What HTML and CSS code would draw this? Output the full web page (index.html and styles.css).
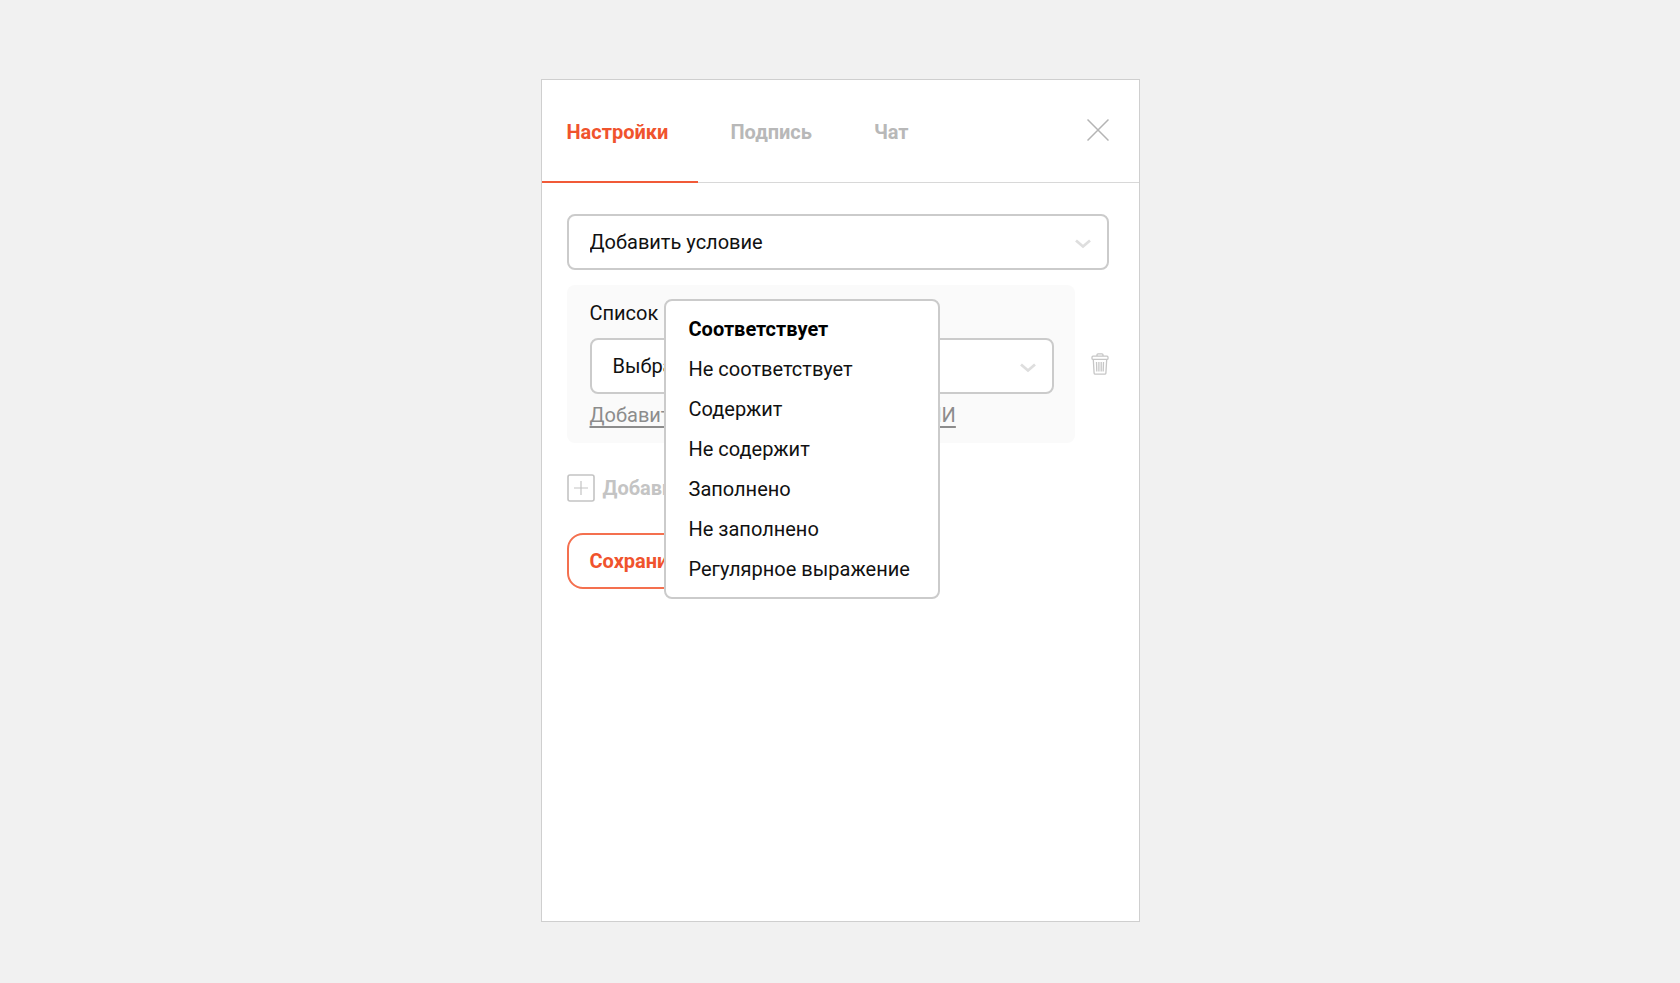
FILE: index.html
```html
<!DOCTYPE html>
<html lang="ru">
<head>
<meta charset="utf-8">
<meta name="viewport" content="width=device-width, initial-scale=1">
<title>Настройки</title>
<link rel="stylesheet" href="styles.css">
</head>
<body>
<main class="panel">
  <header class="panel-head">
    <nav class="tabs">
      <button class="tab tab-active" type="button">Настройки</button>
      <button class="tab" type="button">Подпись</button>
      <button class="tab" type="button">Чат</button>
    </nav>
    <button class="icon-button close" type="button" aria-label="Закрыть">
      <svg width="22" height="22" viewBox="0 0 22 22" fill="none" stroke="#b4b4b4" stroke-width="1.5"><path d="M.5.5l21 21M21.5.5l-21 21"/></svg>
    </button>
  </header>
  <form class="panel-body">
    <div class="select">
      <select class="select-field" aria-label="Условие"><option>Добавить условие</option></select>
      <svg class="chevron" width="16" height="10" viewBox="0 0 16 10" fill="none" stroke="#dedede" stroke-width="2.8"><path d="M1 1.5l7 6 7-6"/></svg>
    </div>
    <div class="condition">
      <section class="group">
        <label class="group-label" for="list">Список</label>
        <div class="select">
          <select class="select-field" id="list"><option>Выбрать</option></select>
          <svg class="chevron" width="16" height="10" viewBox="0 0 16 10" fill="none" stroke="#dedede" stroke-width="2.8"><path d="M1 1.5l7 6 7-6"/></svg>
        </div>
        <a class="group-link" href="#">Добавить условия с операторами ИЛИ</a>
        <ul class="menu">
          <li><button class="menu-item menu-item-current" type="button">Соответствует</button></li>
          <li><button class="menu-item" type="button">Не соответствует</button></li>
          <li><button class="menu-item" type="button">Содержит</button></li>
          <li><button class="menu-item" type="button">Не содержит</button></li>
          <li><button class="menu-item" type="button">Заполнено</button></li>
          <li><button class="menu-item" type="button">Не заполнено</button></li>
          <li><button class="menu-item" type="button">Регулярное выражение</button></li>
        </ul>
      </section>
      <button class="icon-button" type="button" aria-label="Удалить">
        <svg width="18" height="22" viewBox="0 0 18 22" fill="none" stroke="#c6c6c6" stroke-width="1.3"><rect x="1" y="3.2" width="16" height="3.2" rx="1"/><path d="M6 3V1.8Q6 .8 7 .8h4q1 0 1 1V3M2.3 6.5l.8 13.6q.1 1.1 1.2 1.1h9.4q1.100 0 1.200-1.100l.8-13.600M5.500 9l.3 9.500M7.900 9v9.500M10.200 9v9.500M12.500 9l-.3 9.500"/></svg>
      </button>
    </div>
    <button class="add" type="button">
      <svg width="28" height="28" viewBox="0 0 28 28" fill="none" stroke="#c4c4c4"><rect x="1" y="1" width="26" height="26" rx="2" stroke-width="1.6"/><path d="M14 7v14M7 14h14" stroke-width="1.200"/></svg>
      Добавить
    </button>
    <button class="save" type="submit">Сохранить</button>
  </form>
</main>
</body>
</html>
```
FILE: styles.css
```css
* {
  box-sizing: border-box;
}

body {
  display: flex;
  justify-content: center;
  min-height: 100vh;
  margin: 0;
  padding: 79px 16px 61px;
  background: #f1f1f1;
  color: #111;
  font: 20px/24px Roboto, sans-serif;
}

button,
select {
  padding: 0;
  border: 0;
  background: none;
  color: inherit;
  font: inherit;
  cursor: pointer;
}

svg {
  display: block;
}

.panel {
  width: 100%;
  max-width: 599px;
  border: 1px solid #cfcfcf;
  background: #fff;
}

.panel-head {
  display: flex;
  align-items: center;
  justify-content: space-between;
  padding-right: 30px;
  border-bottom: 1px solid #d8d8d8;
}

.tabs {
  display: flex;
  gap: 32px;
}

.tab {
  margin-bottom: -1px;
  padding: 40px 0 37px;
  border-bottom: 2px solid transparent;
  color: #b8b8b8;
  font-weight: 700;
}

.tab + .tab {
  padding-right: 30px;
}

.tab-active {
  padding: 40px 30px 37px 25px;
  border-color: #f15a38;
  color: #f0532d;
}

.icon-button {
  flex: none;
}

.close {
  margin-bottom: 3px;
}

.panel-body {
  display: flex;
  flex-direction: column;
  align-items: flex-start;
  padding: 31px 30px 31px 25px;
}

.select {
  display: grid;
  align-items: center;
  width: 100%;
}

.select-field {
  grid-area: 1 / 1;
  width: 100%;
  height: 56px;
  padding: 0 48px 0 21px;
  border: 2px solid #cbcbcb;
  border-radius: 8px;
  background: #fff;
  appearance: none;
}

.chevron {
  grid-area: 1 / 1;
  justify-self: end;
  margin: 4px 18px 0 0;
  pointer-events: none;
}

.condition {
  display: flex;
  align-items: center;
  gap: 16px;
  width: 100%;
  margin-top: 15px;
}

.group {
  position: relative;
  flex: 1;
  padding: 16px 21px 16px 23px;
  border-radius: 8px;
  background: #fafafa;
}

.group-label {
  display: block;
  margin-bottom: 13px;
}

.group-link {
  display: inline-block;
  margin-top: 9px;
  color: #8c8c8c;
  text-underline-offset: 4px;
  text-decoration-thickness: 2px;
}

.menu {
  position: absolute;
  top: 14px;
  left: 97px;
  width: 276px;
  margin: 0;
  padding: 8px 0;
  border: 2px solid #cbcbcb;
  border-radius: 8px;
  background: #fff;
  list-style: none;
}

.menu-item {
  display: block;
  width: 100%;
  padding: 8px 23px;
  text-align: left;
  white-space: nowrap;
}

.menu-item-current {
  color: #000;
  font-weight: 700;
}

.add {
  display: flex;
  align-items: center;
  gap: 8px;
  margin-top: 31px;
  color: #c4c4c4;
  font-weight: 700;
}

.save {
  height: 56px;
  margin-top: 31px;
  padding: 0 21px;
  border: 2px solid #f4704f;
  border-radius: 16px;
  color: #f0532d;
  font-weight: 700;
}
```
